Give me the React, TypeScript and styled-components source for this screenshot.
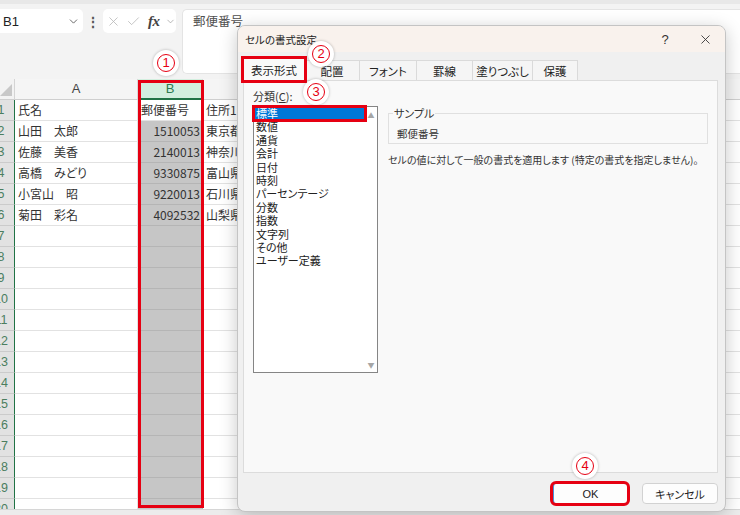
import React from "react";
import styled, { createGlobalStyle, css } from "styled-components";
import { ChevronDown, X, Check } from "lucide-react";

const JP = `"Noto Sans CJK JP", "Noto Sans", sans-serif`;
const UI = `"Liberation Sans", "Noto Sans CJK JP", sans-serif`;
const RED = "#e60012";

const Global = createGlobalStyle`
  html, body { margin: 0; padding: 0; background: #f3f3f3; }
  body { font-family: ${JP}; }
  * { box-sizing: border-box; }
`;

const Page = styled.div`
  position: relative;
  width: 740px;
  height: 515px;
  overflow: hidden;
  background: #f3f3f3;
  display: flex;
  flex-direction: column;
  font-family: ${JP};
  font-feature-settings: "palt" 1;
  color: #262626;
`;

/* ---------- formula bar ---------- */
const FormulaBar = styled.div`
  height: 79px;
  flex: none;
  border-top: 4px solid #e8e8e8;
  padding-top: 5px;
  display: flex;
  align-items: flex-start;
`;

const NameBox = styled.div`
  width: 83px;
  height: 24px;
  background: #fff;
  border-radius: 0 5px 5px 0;
  display: flex;
  align-items: center;
  justify-content: space-between;
  padding: 0 3px 0 3px;
  font-family: ${UI};
  font-size: 13px;
  color: #222;
`;

const Dots = styled.div`
  width: 20px;
  height: 24px;
  line-height: 24px;
  text-align: center;
  font-size: 14px;
  font-weight: bold;
  color: #555;
`;

const FuncBox = styled.div`
  width: 73px;
  height: 24px;
  background: #fff;
  border-radius: 5px;
  display: flex;
  align-items: center;
  padding-left: 3px;
  gap: 5px;
  color: #b8b8b8;
`;

const Fx = styled.span`
  font-family: "Liberation Serif", serif;
  font-style: italic;
  font-weight: bold;
  font-size: 15px;
  color: #444;
  margin-left: 2px;
  letter-spacing: -0.5px;
`;

const FormulaInput = styled.div`
  flex: 1;
  margin-left: 6px;
  height: 65px;
  background: #fff;
  border: 1px solid #e4e4e4;
  border-right: none;
  border-radius: 5px 0 0 5px;
  padding: 2px 10px;
  font-size: 12.5px;
  line-height: 17px;
  color: #505050;
`;

/* ---------- sheet ---------- */
const Sheet = styled.div`
  position: relative;
  flex: 1;
  overflow: hidden;
`;

const Grid = styled.div`
  margin-left: -12px;
  display: grid;
  grid-template-columns: 27px 123px 65px 90px repeat(8, 72px);
  grid-auto-rows: 21px;
  width: max-content;
`;

const Corner = styled.div`
  position: relative;
  background: #f3f3f3;
  border-right: 1px solid #d4d4d4;
  border-bottom: 1px solid #cfcfcf;
  &::after {
    content: "";
    position: absolute;
    right: 2px;
    bottom: 3px;
    border-left: 12px solid transparent;
    border-bottom: 12px solid #c8c8c8;
  }
`;

const ColHead = styled.div<{ $sel?: boolean }>`
  background: ${(p) => (p.$sel ? "#d3efdf" : "#f5f5f5")};
  color: ${(p) => (p.$sel ? "#2e7a50" : "#444")};
  border-right: 1px solid #d8d8d8;
  border-bottom: ${(p) => (p.$sel ? "2px solid #217346" : "1px solid #cfcfcf")};
  font-family: ${UI};
  font-size: 13px;
  line-height: 20px;
  text-align: center;
`;

const RowHead = styled.div`
  background: #e2e2e2;
  color: #4b7e5f;
  border-right: 1px solid #217346;
  border-bottom: 1px solid #cbcbcb;
  font-family: ${UI};
  font-size: 12.5px;
  line-height: 20px;
  text-align: center;
`;

const Cell = styled.div<{ $sel?: boolean; $num?: boolean }>`
  background: ${(p) => (p.$sel ? "#c6c6c6" : "#fff")};
  border-right: 1px solid ${(p) => (p.$sel ? "#b5b5b5" : "#e2e2e2")};
  border-bottom: 1px solid ${(p) => (p.$sel ? "#b5b5b5" : "#e2e2e2")};
  font-size: 12px;
  line-height: 20px;
  padding: 0 2px 0 3px;
  text-align: ${(p) => (p.$num ? "right" : "left")};
  white-space: nowrap;
  overflow: hidden;
  color: #333;
`;

const ColumnMark = styled.div`
  position: absolute;
  left: 138px;
  top: 1px;
  width: 66px;
  height: 428px;
  border: 3px solid ${RED};
  pointer-events: none;
`;

const BottomStrip = styled.div`
  height: 6px;
  flex: none;
  background: #ececec;
  border-top: 1px solid #d6d6d6;
`;

/* ---------- dialog ---------- */
const Dialog = styled.div`
  position: absolute;
  left: 237px;
  top: 25px;
  width: 489px;
  background: #f0f0f0;
  border: 1px solid #c4c4c4;
  border-radius: 8px;
  box-shadow: 0 4px 18px rgba(0, 0, 0, 0.22);
  overflow: hidden;
  display: flex;
  flex-direction: column;
`;

const TitleBar = styled.div`
  height: 26px;
  background: #f9f2ed;
  display: flex;
  align-items: center;
  padding-left: 7px;
  font-size: 10.5px;
  color: #222;
`;

const TitleButton = styled.div<{ $first?: boolean }>`
  width: 40px;
  height: 26px;
  display: flex;
  align-items: center;
  justify-content: center;
  margin-left: ${(p) => (p.$first ? "auto" : "0")};
  font-family: ${UI};
  font-size: 13px;
  color: #333;
`;

const Body = styled.div`
  padding: 6px 7px 7px 5px;
  display: flex;
  flex-direction: column;
`;

const TabRow = styled.div`
  display: flex;
  align-items: flex-end;
  height: 23px;
`;

const Tab = styled.div<{ $active?: boolean; $w: number }>`
  width: ${(p) => p.$w}px;
  height: ${(p) => (p.$active ? 23 : 20)}px;
  margin-bottom: ${(p) => (p.$active ? 0 : 1)}px;
  border: 1px solid #dadada;
  border-bottom: none;
  margin-right: -1px;
  background: ${(p) => (p.$active ? "#f9f9f9" : "#f5f5f5")};
  display: flex;
  align-items: center;
  justify-content: center;
  font-size: 11.5px;
  color: #222;
  position: relative;
  z-index: ${(p) => (p.$active ? 2 : 0)};
  ${(p) =>
    p.$active &&
    css`
      outline: 3px solid ${RED};
      outline-offset: -1px;
    `}
`;

const Panel = styled.div`
  position: relative;
  z-index: 1;
  margin-top: -1px;
  height: 393px;
  background: #f9f9f9;
  border: 1px solid #dcdcdc;
  padding: 8px 9px;
  display: flex;
  gap: 10px;
`;

const LeftCol = styled.div`
  flex: none;
  width: 125px;
  display: flex;
  flex-direction: column;
`;

const Label = styled.div`
  font-size: 11px;
  line-height: 14px;
  color: #333;
  margin-bottom: 3px;
  u {
    text-decoration: underline;
  }
`;

const ListBox = styled.div`
  height: 267px;
  background: #fff;
  border: 1px solid #858585;
  display: flex;
`;

const Items = styled.div`
  flex: 1;
  display: flex;
  flex-direction: column;
`;

const Item = styled.div<{ $sel?: boolean }>`
  height: 13.4px;
  line-height: 13.4px;
  font-size: 11px;
  padding-left: 2px;
  white-space: nowrap;
  color: ${(p) => (p.$sel ? "#fff" : "#222")};
  background: ${(p) => (p.$sel ? "#0078d7" : "transparent")};
  position: relative;
  ${(p) =>
    p.$sel &&
    css`
      outline: 3px solid ${RED};
      outline-offset: -1px;
      z-index: 1;
    `}
`;

const ScrollTrack = styled.div`
  width: 12px;
  display: flex;
  flex-direction: column;
  justify-content: space-between;
  align-items: center;
  padding: 4px 0 3px;
  font-size: 7px;
  line-height: 8px;
  color: #a6a6a6;
`;

const RightCol = styled.div`
  flex: 1;
  min-width: 0;
  display: flex;
  flex-direction: column;
`;

const Sample = styled.fieldset`
  margin: 18px 0 0;
  padding: 8px 8px 2px;
  border: 1px solid #e0e0e0;
  min-width: 0;
`;

const Legend = styled.legend`
  font-size: 11px;
  line-height: 12px;
  padding: 0 1px;
  margin-left: -4px;
  color: #333;
`;

const SampleValue = styled.div`
  font-size: 10.5px;
  line-height: 14px;
  color: #333;
`;

const Description = styled.div`
  margin-top: 9px;
  font-size: 10px;
  line-height: 14px;
  white-space: nowrap;
  color: #333;
`;

const ButtonRow = styled.div`
  margin-top: 10px;
  display: flex;
  justify-content: flex-end;
  gap: 14px;
`;

const Button = styled.div<{ $primary?: boolean }>`
  width: 76px;
  height: 21px;
  background: #fdfdfd;
  border: 1px solid #d2d2d2;
  border-radius: 4px;
  display: flex;
  align-items: center;
  justify-content: center;
  font-size: 11px;
  color: #222;
  font-family: ${UI};
  ${(p) =>
    p.$primary &&
    css`
      border-left: 2px solid #4a90d9;
      outline: 3px solid ${RED};
      outline-offset: -1px;
    `}
`;

/* ---------- markers ---------- */
const Marker = styled.div`
  position: absolute;
  width: 26px;
  height: 26px;
  border-radius: 50%;
  background: #fff;
  box-shadow: 0 0 3px rgba(0, 0, 0, 0.28);
  display: flex;
  align-items: center;
  justify-content: center;
  z-index: 10;
`;

const Ring = styled.div`
  width: 18px;
  height: 18px;
  border-radius: 50%;
  border: 1.3px solid ${RED};
  color: ${RED};
  font-family: ${UI};
  font-size: 13px;
  line-height: 16px;
  text-align: center;
`;

const rows: [string, string, string][] = [
  ["氏名", "郵便番号", "住所1"],
  ["山田　太郎", "1510053", "東京都"],
  ["佐藤　美香", "2140013", "神奈川県"],
  ["高橋　みどり", "9330875", "富山県"],
  ["小宮山　昭", "9220013", "石川県"],
  ["菊田　彩名", "4092532", "山梨県"],
];

const extraCols = ["D", "E", "F", "G", "H", "I", "J", "K"];

const categories = [
  "標準",
  "数値",
  "通貨",
  "会計",
  "日付",
  "時刻",
  "パーセンテージ",
  "分数",
  "指数",
  "文字列",
  "その他",
  "ユーザー定義",
];

const tabs: [string, number][] = [
  ["表示形式", 62],
  ["配置", 56],
  ["フォント", 58],
  ["罫線", 57],
  ["塗りつぶし", 61],
  ["保護", 46],
];

const markers: [string, number, number][] = [
  ["1", 166, 63],
  ["2", 321, 54],
  ["3", 316, 92],
  ["4", 585, 466],
];

export default function App() {
  const sheetRows = [];
  for (let r = 1; r <= 20; r++) {
    const data = rows[r - 1];
    sheetRows.push(
      <React.Fragment key={r}>
        <RowHead>{r}</RowHead>
        <Cell>{data ? data[0] : ""}</Cell>
        <Cell $sel={r > 1} $num={r > 1}>
          {data ? data[1] : ""}
        </Cell>
        <Cell>{data ? data[2] : ""}</Cell>
        {extraCols.map((c) => (
          <Cell key={c} />
        ))}
      </React.Fragment>
    );
  }

  return (
    <>
      <Global />
      <Page>
        <FormulaBar>
          <NameBox>
            <span>B1</span>
            <ChevronDown size={13} strokeWidth={1.6} color="#555" />
          </NameBox>
          <Dots>⋮</Dots>
          <FuncBox>
            <X size={15} strokeWidth={1.3} />
            <Check size={15} strokeWidth={1.3} />
            <Fx>fx</Fx>
            <ChevronDown size={11} strokeWidth={1.5} color="#999" />
          </FuncBox>
          <FormulaInput>郵便番号</FormulaInput>
        </FormulaBar>

        <Sheet>
          <Grid>
            <Corner />
            <ColHead>A</ColHead>
            <ColHead $sel>B</ColHead>
            <ColHead>C</ColHead>
            {extraCols.map((c) => (
              <ColHead key={c}>{c}</ColHead>
            ))}
            {sheetRows}
          </Grid>
          <ColumnMark />
        </Sheet>
        <BottomStrip />

        <Dialog>
          <TitleBar>
            セルの書式設定
            <TitleButton $first>?</TitleButton>
            <TitleButton>
              <X size={15} strokeWidth={1.4} />
            </TitleButton>
          </TitleBar>
          <Body>
            <TabRow>
              {tabs.map(([t, w], i) => (
                <Tab key={t} $w={w} $active={i === 0}>
                  {t}
                </Tab>
              ))}
            </TabRow>
            <Panel>
              <LeftCol>
                <Label>
                  分類(<u>C</u>):
                </Label>
                <ListBox>
                  <Items>
                    {categories.map((c, i) => (
                      <Item key={c} $sel={i === 0}>
                        {c}
                      </Item>
                    ))}
                  </Items>
                  <ScrollTrack>
                    <span>▲</span>
                    <span>▼</span>
                  </ScrollTrack>
                </ListBox>
              </LeftCol>
              <RightCol>
                <Sample>
                  <Legend>サンプル</Legend>
                  <SampleValue>郵便番号</SampleValue>
                </Sample>
                <Description>
                  セルの値に対して一般の書式を適用します (特定の書式を指定しません)。
                </Description>
              </RightCol>
            </Panel>
            <ButtonRow>
              <Button $primary>OK</Button>
              <Button>キャンセル</Button>
            </ButtonRow>
          </Body>
        </Dialog>

        {markers.map(([n, x, y]) => (
          <Marker key={n} style={{ left: x - 13, top: y - 13 }}>
            <Ring>{n}</Ring>
          </Marker>
        ))}
      </Page>
    </>
  );
}
